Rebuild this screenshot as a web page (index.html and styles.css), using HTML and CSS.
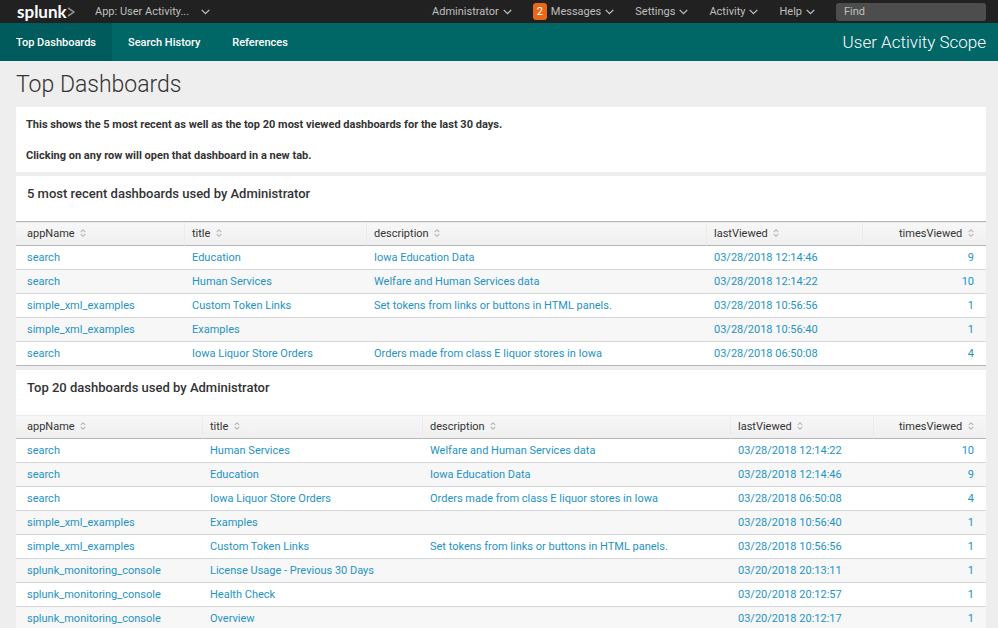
FILE: index.html
```html
<!DOCTYPE html>
<html lang="en">
<head>
    <meta charset="UTF-8">
    <meta name="viewport" content="width=device-width, initial-scale=1.0">
    <title>Top Dashboards | User Activity Scope</title>
    <link rel="stylesheet" href="styles.css">
</head>
<body>
    <!-- shared symbols -->
    <svg class="symbols" aria-hidden="true">
        <symbol id="caret" viewBox="0 0 9 6">
            <path d="M0.7 0.9 L4.5 4.7 L8.3 0.9" fill="none" stroke="currentColor" stroke-width="1.3"/>
        </symbol>
        <symbol id="sort" viewBox="0 0 6 8">
            <path d="M0.7 3 L3 0.8 L5.3 3 M0.7 5 L3 7.2 L5.3 5" fill="none" stroke="currentColor" stroke-width="1.1"/>
        </symbol>
    </svg>

    <header class="topbar">
        <a class="logo" href="#">splunk<svg viewBox="0 0 8 12" aria-hidden="true"><path d="M1 2 L7 6 L1 10" fill="none" stroke="currentColor" stroke-width="1.6"/></svg></a>
        <button class="menu menu-app" type="button">App: User Activity... <svg><use href="#caret"/></svg></button>
        <div class="topbar-right">
            <button class="menu" type="button">Administrator <svg><use href="#caret"/></svg></button>
            <button class="menu" type="button"><span class="badge">2</span>Messages <svg><use href="#caret"/></svg></button>
            <button class="menu" type="button">Settings <svg><use href="#caret"/></svg></button>
            <button class="menu" type="button">Activity <svg><use href="#caret"/></svg></button>
            <button class="menu" type="button">Help <svg><use href="#caret"/></svg></button>
            <input class="find" type="text" placeholder="Find" aria-label="Find">
        </div>
    </header>

    <nav class="appnav">
        <a class="active" href="#">Top Dashboards</a>
        <a href="#">Search History</a>
        <a href="#">References</a>
        <span class="app-name">User Activity Scope</span>
    </nav>

    <main>
        <h1>Top Dashboards</h1>

        <section class="panel intro">
            <p>This shows the 5 most recent as well as the top 20 most viewed dashboards for the last 30 days.</p>
            <p>Clicking on any row will open that dashboard in a new tab.</p>
        </section>

        <section class="panel">
            <h2>5 most recent dashboards used by Administrator</h2>
            <table class="recent">
                <thead>
                    <tr>
                        <th class="app">appName <svg><use href="#sort"/></svg></th>
                        <th class="title">title <svg><use href="#sort"/></svg></th>
                        <th>description <svg><use href="#sort"/></svg></th>
                        <th class="last">lastViewed <svg><use href="#sort"/></svg></th>
                        <th class="times">timesViewed <svg><use href="#sort"/></svg></th>
                    </tr>
                </thead>
                <tbody>
                    <tr><td>search</td><td>Education</td><td>Iowa Education Data</td><td>03/28/2018 12:14:46</td><td>9</td></tr>
                    <tr><td>search</td><td>Human Services</td><td>Welfare and Human Services data</td><td>03/28/2018 12:14:22</td><td>10</td></tr>
                    <tr><td>simple_xml_examples</td><td>Custom Token Links</td><td>Set tokens from links or buttons in HTML panels.</td><td>03/28/2018 10:56:56</td><td>1</td></tr>
                    <tr><td>simple_xml_examples</td><td>Examples</td><td></td><td>03/28/2018 10:56:40</td><td>1</td></tr>
                    <tr><td>search</td><td>Iowa Liquor Store Orders</td><td>Orders made from class E liquor stores in Iowa</td><td>03/28/2018 06:50:08</td><td>4</td></tr>
                </tbody>
            </table>
        </section>

        <section class="panel">
            <h2>Top 20 dashboards used by Administrator</h2>
            <table class="top">
                <thead>
                    <tr>
                        <th class="app">appName <svg><use href="#sort"/></svg></th>
                        <th class="title">title <svg><use href="#sort"/></svg></th>
                        <th>description <svg><use href="#sort"/></svg></th>
                        <th class="last">lastViewed <svg><use href="#sort"/></svg></th>
                        <th class="times">timesViewed <svg><use href="#sort"/></svg></th>
                    </tr>
                </thead>
                <tbody>
                    <tr><td>search</td><td>Human Services</td><td>Welfare and Human Services data</td><td>03/28/2018 12:14:22</td><td>10</td></tr>
                    <tr><td>search</td><td>Education</td><td>Iowa Education Data</td><td>03/28/2018 12:14:46</td><td>9</td></tr>
                    <tr><td>search</td><td>Iowa Liquor Store Orders</td><td>Orders made from class E liquor stores in Iowa</td><td>03/28/2018 06:50:08</td><td>4</td></tr>
                    <tr><td>simple_xml_examples</td><td>Examples</td><td></td><td>03/28/2018 10:56:40</td><td>1</td></tr>
                    <tr><td>simple_xml_examples</td><td>Custom Token Links</td><td>Set tokens from links or buttons in HTML panels.</td><td>03/28/2018 10:56:56</td><td>1</td></tr>
                    <tr><td>splunk_monitoring_console</td><td>License Usage - Previous 30 Days</td><td></td><td>03/20/2018 20:13:11</td><td>1</td></tr>
                    <tr><td>splunk_monitoring_console</td><td>Health Check</td><td></td><td>03/20/2018 20:12:57</td><td>1</td></tr>
                    <tr><td>splunk_monitoring_console</td><td>Overview</td><td></td><td>03/20/2018 20:12:17</td><td>1</td></tr>
                </tbody>
            </table>
        </section>
    </main>
</body>
</html>
```
FILE: styles.css
```css
* {
    box-sizing: border-box;
}
html {
    scrollbar-width: none;
}
body {
    margin: 0;
    background: #eeeeee;
    color: #333333;
    font: 11px/16px Roboto, sans-serif;
}
.symbols {
    display: none;
}

/* top bar */
.topbar {
    display: flex;
    align-items: center;
    height: 23px;
    padding: 0 12px 0 17px;
    background: #212121;
}
.logo {
    display: flex;
    align-items: center;
    width: 78px;
    color: #ffffff;
    font: bold 17px/22px Lato, sans-serif;
    text-decoration: none;
}
.logo svg {
    width: 8px;
    height: 12px;
    color: #8c8c8c;
}
.menu {
    display: flex;
    align-items: center;
    gap: 4px;
    padding: 0;
    border: none;
    background: none;
    color: #bfbfbf;
    font: inherit;
    cursor: pointer;
}
.menu svg {
    width: 9px;
    height: 6px;
}
.menu-app {
    gap: 12px;
}
.menu:hover {
    color: #ffffff;
}
.topbar-right {
    display: flex;
    align-items: center;
    gap: 21px;
    margin-left: auto;
}
.badge {
    width: 14px;
    border-radius: 3px;
    background: #e8681a;
    color: #ffffff;
    line-height: 17px;
    text-align: center;
}
.find {
    width: 150px;
    height: 18px;
    padding: 0 8px;
    border: none;
    border-radius: 3px;
    background: #4d4d4d;
    color: #ffffff;
    font: inherit;
}
.find::placeholder {
    color: #bfbfbf;
    opacity: 1;
}

/* app navigation */
.appnav {
    display: flex;
    height: 38px;
    padding-right: 12px;
    background: #006666;
    line-height: 38px;
}
.appnav a {
    padding: 1px 16px 0;
    color: #ffffff;
    font-weight: 500;
    text-decoration: none;
}
.appnav .active {
    background: #005c5c;
}
.app-name {
    margin-left: auto;
    color: #ffffff;
    font-size: 17px;
    font-weight: 300;
}

main {
    padding: 0 12px 0 16px;
}
h1 {
    margin: 0;
    padding: 8px 0 6px;
    font-size: 23px;
    font-weight: 300;
    line-height: 32px;
}
.panel {
    margin-bottom: 4px;
    background: #ffffff;
}
.intro {
    padding: 10px 10px 8px;
    font-weight: 700;
}
.intro p {
    margin: 0 0 15px;
}
.intro p:last-child {
    margin: 0;
}
h2 {
    margin: 0;
    padding: 8px 11px 17px;
    font-size: 13px;
    font-weight: 500;
    line-height: 20px;
}

/* tables */
table {
    width: 100%;
    table-layout: fixed;
    border-collapse: separate;
    border-spacing: 0;
}
th,
td {
    height: 24px;
    padding: 0 8px;
    border-bottom: 1px solid #d5d5d5;
    text-align: left;
    white-space: nowrap;
}
th:first-child,
td:first-child {
    padding-left: 11px;
}
th:last-child,
td:last-child {
    padding-right: 12px;
    text-align: right;
}
th {
    padding-left: 7px;
    border-bottom-color: #b5b5b5;
    border-left: 1px solid #ebebeb;
    background: linear-gradient(#f7f7f7, #f0f0f0);
    box-shadow: inset 0 1px #ebebeb;
    font-weight: 400;
}
th:first-child {
    border-left: none;
}
th svg {
    width: 6px;
    height: 8px;
    margin-left: 3px;
    color: #bbbbbb;
}
td {
    color: #1e93c6;
}
tbody tr {
    cursor: pointer;
}
tbody tr:nth-child(even) {
    background: #f7f7f7;
}
.recent {
    border-top: 1px solid #b5b5b5;
}
.recent tr:last-child td {
    border-bottom-color: #b5b5b5;
}
.recent .app { width: 168px; }
.recent .title { width: 182px; }
.recent .last { width: 156px; }
.recent .times { width: 124px; }
.top .app { width: 186px; }
.top .title { width: 220px; }
.top .last { width: 143px; }
.top .times { width: 113px; }
```
